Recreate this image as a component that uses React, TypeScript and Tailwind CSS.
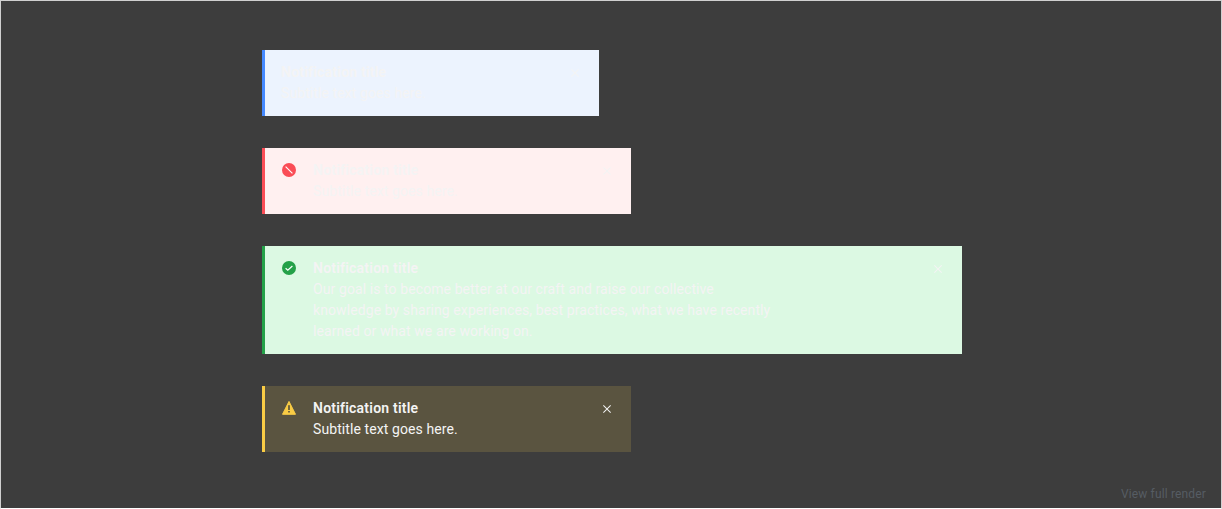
import React from "react";

const plex = "[font-family:'Roboto','Noto_Sans',sans-serif]";

function Close({ color }: { color: string }) {
  return (
    <svg width="16" height="16" viewBox="0 0 32 32" fill={color} className="shrink-0">
      <path d="M24 9.4 22.6 8 16 14.6 9.4 8 8 9.4 14.6 16 8 22.6 9.4 24 16 17.4 22.6 24 24 22.6 17.4 16 24 9.4z" />
    </svg>
  );
}

function ErrorIcon() {
  return (
    <svg width="20" height="20" viewBox="0 0 20 20" className="shrink-0">
      <circle cx="10" cy="10" r="7" fill="#fa4d56" />
      <path d="M6.6 6.6 13.4 13.4" stroke="#fff" strokeWidth="1.1" />
    </svg>
  );
}

function SuccessIcon() {
  return (
    <svg width="20" height="20" viewBox="0 0 20 20" className="shrink-0">
      <circle cx="10" cy="10" r="7" fill="#24a148" />
      <path d="M6.6 10.2 8.8 12.2 13.4 8" stroke="#fff" strokeWidth="1.2" fill="none" />
    </svg>
  );
}

function WarningIcon() {
  return (
    <svg width="20" height="20" viewBox="0 0 20 20" className="shrink-0">
      <path d="M10 3.4 16.5 16.3H3.5z" fill="#f9cc45" stroke="#f9cc45" strokeLinejoin="round" />
      <rect x="9.25" y="7.2" width="1.5" height="4.8" fill="#4a4636" />
      <rect x="9.25" y="13" width="1.5" height="1.5" fill="#4a4636" />
    </svg>
  );
}

type Props = {
  wrap: string;
  icon?: React.ReactNode;
  title: string;
  children: React.ReactNode;
  bodyClass?: string;
};

function Notification({ wrap, icon, title, children, bodyClass = "" }: Props) {
  return (
    <div className={`flex border-l-[3px] ${wrap}`}>
      {icon ? <div className="ml-[14px] mr-[14px] mt-[12px] shrink-0">{icon}</div> : <div className="w-4 shrink-0" />}
      <div className="flex-1 pt-[12px] text-[#f4f4f4]">
        <div className="mb-[1px] text-[14px] font-semibold leading-[20px] tracking-[0.22px]">{title}</div>
        <div className={`text-[14px] leading-[21px] tracking-[0.09px] ${bodyClass}`}>{children}</div>
      </div>
      <div className="pr-[16px] pt-[15px]">
        <Close color="#f4f4f4" />
      </div>
    </div>
  );
}

export default function App() {
  return (
    <div className={`relative h-[509px] w-[1222px] overflow-hidden border border-[#d0d0d0] border-b-[#ffffff] bg-[#3d3d3d] ${plex}`}>
      <div className="ml-[261px] flex flex-col items-start gap-[32px] pt-[49px]">
        <Notification wrap="h-[66px] w-[337px] border-[#4589ff] bg-[#ecf3fe]" title="Notification title">
          Subtitle text goes here.
        </Notification>
        <Notification wrap="h-[66px] w-[369px] border-[#fa4d56] bg-[#fff0f0]" icon={<ErrorIcon />} title="Notification title">
          Subtitle text goes here.
        </Notification>
        <Notification
          wrap="h-[108px] w-[700px] border-[#24a148] bg-[#dcf9e3]"
          icon={<SuccessIcon />}
          title="Notification title"
          bodyClass="max-w-[462px]"
        >
          Our goal is to become better at our craft and raise our collective knowledge by sharing experiences, best practices, what we have recently learned or what we are working on.
        </Notification>
        <Notification wrap="h-[66px] w-[369px] border-[#f9cc45] bg-[#5a5440]" icon={<WarningIcon />} title="Notification title">
          Subtitle text goes here.
        </Notification>
      </div>
      <div className="absolute bottom-[6px] right-[15px] text-[12px] leading-[16px] tracking-[0.15px] text-[#565c63]">View full render</div>
    </div>
  );
}
